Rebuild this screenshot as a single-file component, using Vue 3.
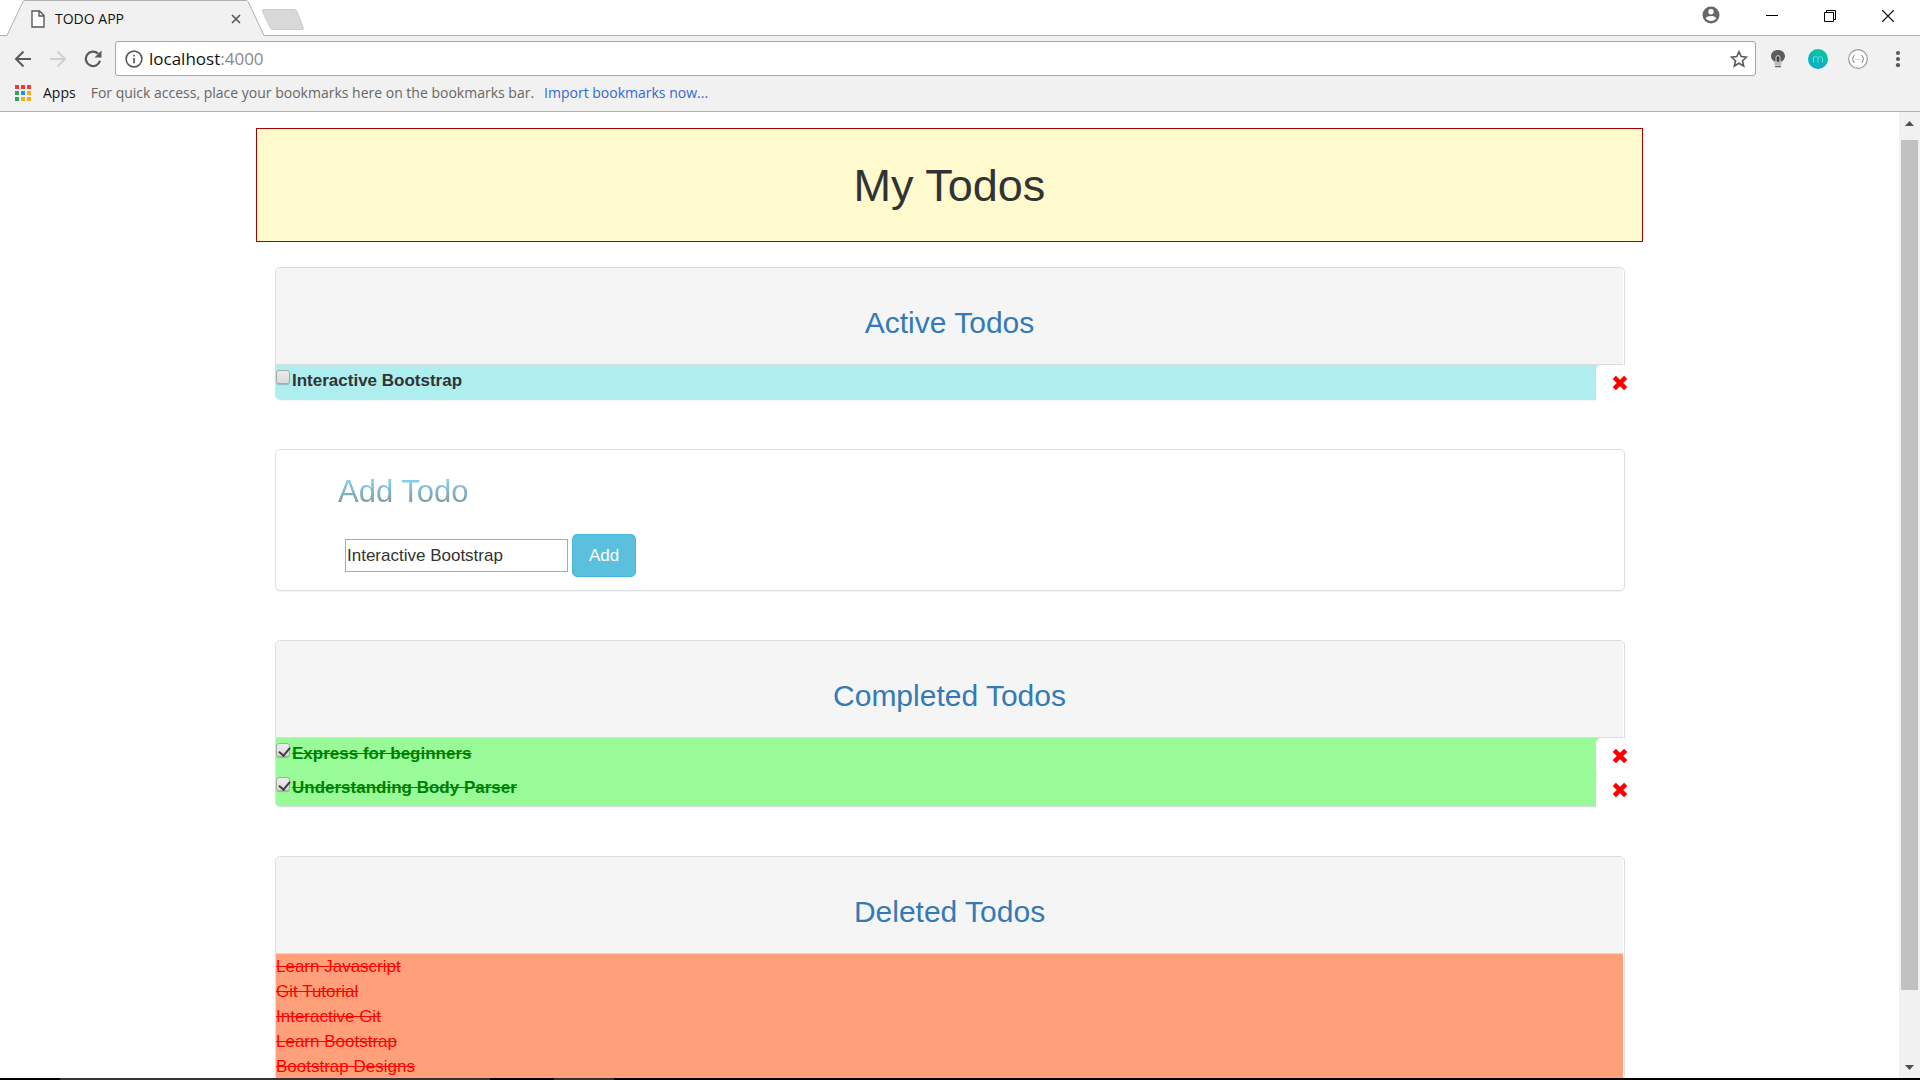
<script setup>
import { ref } from 'vue'

const newTodo = ref('Interactive Bootstrap')
const active = ref([{ text: 'Interactive Bootstrap', done: false }])
const completed = ref([
  { text: 'Express for beginners', done: true },
  { text: 'Understanding Body Parser', done: true },
])
const deleted = ref(['Learn Javascript', 'Git Tutorial', 'Interactive Git', 'Learn Bootstrap', 'Bootstrap Designs'])

function addTodo() {
  if (newTodo.value) active.value.push({ text: newTodo.value, done: false })
}
function removeFrom(list, index) {
  deleted.value.push(list.splice(index, 1)[0].text)
}
</script>

<template>
  <div class="browser">
    <header class="chrome">
      <div class="tab-strip">
        <div class="tab">
          <svg class="tab-shape" width="266" height="36" viewBox="0 0 266 36" aria-hidden="true">
            <path d="M0 36V35.500H7L23 1.500Q24 .5 25 .5H246Q247.500 .5 248 1.500L264 35.500H266V36Z" fill="#f1f1f1" />
            <path d="M0 35.500H7L23 1.500Q24 .5 25 .5H246Q247.500 .5 248 1.500L264 35.500H266" fill="none" stroke="#b0b0b0" />
          </svg>
          <svg class="page-icon" width="14" height="18" viewBox="0 0 14 18" aria-hidden="true">
            <path d="M1 1H8.500L13 5.500V17H1ZM8 1V6H13" fill="#fff" stroke="#5a5a5a" stroke-width="1.400" />
          </svg>
          <span class="tab-title">TODO APP</span>
          <button class="tab-close" aria-label="Close tab">
            <svg width="10" height="10" viewBox="0 0 10 10"><path d="M1 1L9 9M9 1L1 9" stroke="#555" stroke-width="1.600" /></svg>
          </button>
        </div>
        <button class="new-tab" aria-label="New tab">
          <svg width="44" height="22" viewBox="0 0 44 22"><path d="M3 .5H33Q35 .5 36 2.500L42 18Q43 20.500 41 20.500H12Q10 20.500 9 18.500L1.500 2.500Q1 .5 3 .5Z" fill="#d8d8d8" stroke="#cacaca" /></svg>
        </button>
        <div class="window-controls">
          <button class="user" aria-label="User">
            <svg width="18" height="18" viewBox="0 0 18 18"><circle cx="9" cy="9" r="8.500" fill="#666" /><circle cx="9" cy="5.800" r="2.700" fill="#fff" /><path d="M3.600 12.300C4.600 10.200 7 9.900 9 9.900S13.400 10.200 14.400 12.300C13 14.300 11 15 9 15S5 14.300 3.600 12.300Z" fill="#fff" /></svg>
          </button>
          <button aria-label="Minimize"><svg width="12" height="12" viewBox="0 0 12 12"><path d="M0 5.500H12" stroke="#000" /></svg></button>
          <button aria-label="Restore"><svg width="12" height="12" viewBox="0 0 12 12"><path d="M.5 2.500H9.500V11.500H.5ZM2.500 2.500V.5H11.500V9.500H9.500" fill="none" stroke="#000" /></svg></button>
          <button aria-label="Close"><svg width="12" height="12" viewBox="0 0 12 12"><path d="M0 0L12 12M12 0L0 12" stroke="#000" stroke-width="1.200" /></svg></button>
        </div>
      </div>

      <div class="toolbar">
        <nav class="nav-buttons">
          <button aria-label="Back"><svg width="18" height="18" viewBox="0 0 18 18"><path d="M17 9H2.500M9.500 1.500L2 9L9.500 16.500" fill="none" stroke="#5a5a5a" stroke-width="2" /></svg></button>
          <button aria-label="Forward"><svg width="18" height="18" viewBox="0 0 18 18"><path d="M1 9H15.500M8.500 1.500L16 9L8.500 16.500" fill="none" stroke="#d0d0d0" stroke-width="2" /></svg></button>
          <button aria-label="Reload"><svg width="18" height="18" viewBox="0 0 18 18"><path d="M14.200 3.800A7.200 7.200 0 1 0 16 10.800" fill="none" stroke="#5a5a5a" stroke-width="2.200" /><path d="M17.500 .5V7.500H10.500Z" fill="#5a5a5a" /></svg></button>
        </nav>
        <div class="omnibox">
          <svg width="18" height="18" viewBox="0 0 18 18" aria-hidden="true"><circle cx="9" cy="9" r="7.900" fill="none" stroke="#5a5a5a" stroke-width="1.600" /><path d="M9 8V13.200M9 4.800V6.500" stroke="#5a5a5a" stroke-width="1.700" /></svg>
          <span class="address" role="textbox" aria-label="Address" contenteditable="true" spellcheck="false">localhost<span class="port">:4000</span></span>
          <button aria-label="Bookmark this page"><svg width="18" height="18" viewBox="0 0 18 18"><path d="M9 1.800L11.200 6.600L16.500 7.100L12.500 10.700L13.700 16L9 13.200L4.300 16L5.500 10.700L1.500 7.100L6.800 6.600Z" fill="none" stroke="#5a5a5a" stroke-width="1.600" /></svg></button>
        </div>
        <div class="extensions">
          <button class="bulb" aria-label="Lightbulb">
            <svg width="16" height="20" viewBox="0 0 16 20"><path d="M8 1C3.800 1 1 3.700 1 7.200C1 10 3 11.500 4.200 12.500H11.800C13 11.500 15 10 15 7.200C15 3.700 12.200 1 8 1Z" fill="#5c5c5c" /><path d="M6 13V8.500Q6 6.500 8 6.500T10 8.500V13" fill="none" stroke="#ccc" /><path d="M8 8V13" stroke="#222" /><path d="M4.500 13H11.500V16H4.500Z" fill="#bbb" /><path d="M5 17.500H11" stroke="#666" stroke-width="1.500" /></svg>
          </button>
          <button aria-label="Momentum">
            <svg width="20" height="20" viewBox="0 0 20 20"><defs><linearGradient id="teal" x1="0" y1="1" x2=".6" y2="0"><stop offset="0" stop-color="#0aa5d8" /><stop offset="1" stop-color="#08c69c" /></linearGradient></defs><circle cx="10" cy="10" r="10" fill="url(#teal)" /><path d="M5.500 13.500V7.500M5.500 9.500Q5.800 7.500 7.800 7.500T10 9.700V13.500M10 9.700Q10 7.500 12.200 7.500T14.500 9.700V13.500" fill="none" stroke="#6fdcd8" /></svg>
          </button>
          <button aria-label="JSON viewer">
            <svg width="20" height="20" viewBox="0 0 20 20"><circle cx="10" cy="10" r="9.300" fill="#fff" stroke="#999" stroke-width="1.200" /><path d="M6.500 6.500Q5.200 6.500 5.200 8T4.200 10Q5.200 10.300 5.200 12T6.500 13.500M13.500 6.500Q14.800 6.500 14.800 8T15.800 10Q14.800 10.300 14.800 12T13.500 13.500" fill="none" stroke="#777" /><path d="M7.500 10.500H13" stroke="#aaa" stroke-dasharray="1 1" /></svg>
          </button>
          <button class="menu" aria-label="Menu"><svg width="6" height="18" viewBox="0 0 6 18"><g fill="#5a5a5a"><circle cx="3" cy="3" r="2.100" /><circle cx="3" cy="9" r="2.100" /><circle cx="3" cy="15.200" r="2.100" /></g></svg></button>
        </div>
      </div>

      <div class="bookmarks">
        <a class="apps" href="#">
          <svg width="17" height="17" viewBox="0 0 17 17" aria-hidden="true">
            <g fill="#f23a36"><rect width="4" height="4" /><rect x="6" width="4" height="4" /><rect x="12" width="4" height="4" /></g>
            <g fill="#35a15a"><rect y="6" width="4" height="4" /><rect y="12" width="4" height="4" /></g>
            <rect x="6" y="6" width="4" height="4" fill="#2a8bf2" />
            <g fill="#fbab0c"><rect x="12" y="6" width="4" height="4" /><rect x="6" y="12" width="4" height="4" /><rect x="12" y="12" width="4" height="4" /></g>
          </svg>
          Apps
        </a>
        <span class="hint">For quick access, place your bookmarks here on the bookmarks bar.</span>
        <a class="import" href="#">Import bookmarks now...</a>
      </div>
    </header>

    <div class="viewport">
      <main class="page">
        <div class="container">
          <h1 class="banner">My Todos</h1>

          <div class="panels">
            <section class="panel">
              <h3 class="panel-heading"><a href="#">Active Todos</a></h3>
              <ul class="todo-list active-list">
                <li v-for="(todo, i) in active" :key="i">
                  <label><input v-model="todo.done" type="checkbox" />{{ todo.text }}</label>
                  <button class="remove" :aria-label="'Delete ' + todo.text" @click="removeFrom(active, i)">
                    <svg width="16" height="16" viewBox="0 0 14 14"><path d="M2 2L12 12M12 2L2 12" stroke="#f00" stroke-width="4" /></svg>
                  </button>
                </li>
              </ul>
            </section>

            <section class="panel add-panel">
              <h3><label for="new-todo">Add Todo</label></h3>
              <form @submit.prevent="addTodo">
                <input id="new-todo" v-model="newTodo" type="text" />
                <button type="submit">Add</button>
              </form>
            </section>

            <section class="panel">
              <h3 class="panel-heading"><a href="#">Completed Todos</a></h3>
              <ul class="todo-list completed-list">
                <li v-for="(todo, i) in completed" :key="i">
                  <label><input v-model="todo.done" type="checkbox" /><s>{{ todo.text }}</s></label>
                  <button class="remove" :aria-label="'Delete ' + todo.text" @click="removeFrom(completed, i)">
                    <svg width="16" height="16" viewBox="0 0 14 14"><path d="M2 2L12 12M12 2L2 12" stroke="#f00" stroke-width="4" /></svg>
                  </button>
                </li>
              </ul>
            </section>

            <section class="panel">
              <h3 class="panel-heading"><a href="#">Deleted Todos</a></h3>
              <ul class="deleted-list">
                <li v-for="(text, i) in deleted" :key="i"><s>{{ text }}</s></li>
              </ul>
            </section>
          </div>
        </div>
      </main>
      <div class="scrollbar" aria-hidden="true">
        <svg width="9" height="5" viewBox="0 0 9 5"><path d="M0 5L4.500 0L9 5Z" fill="#505050" /></svg>
        <div class="track"><div class="thumb"></div></div>
        <svg width="9" height="5" viewBox="0 0 9 5"><path d="M0 0L4.500 5L9 0Z" fill="#505050" /></svg>
      </div>
    </div>
    <div class="taskbar" aria-hidden="true"></div>
  </div>
</template>

<style>
body {
  margin: 0;
}
</style>

<style scoped>
* {
  box-sizing: border-box;
}
button {
  display: flex;
  align-items: center;
  justify-content: center;
  padding: 0;
  border: 0;
  background: none;
  font: inherit;
}
svg {
  display: block;
  flex: none;
}
a {
  text-decoration: none;
}
ul {
  margin: 0;
  padding: 0;
  list-style: none;
}
.browser {
  display: flex;
  flex-direction: column;
  height: 100vh;
  overflow: hidden;
  background: #fff;
  color: #333;
  font: 17px/25px "Liberation Sans", Arial, sans-serif;
}

/* Browser chrome */
.chrome {
  flex: none;
  border-bottom: 1px solid #b0b0b0;
  background: #f1f1f1;
  font: 14px/20px "Open Sans", "Segoe UI", sans-serif;
}
.tab-strip {
  display: flex;
  height: 36px;
  border-bottom: 1px solid #b0b0b0;
  background: #fff;
}
.tab {
  position: relative;
  display: flex;
  align-items: center;
  width: 266px;
  height: 36px;
  padding: 2px 25px 0 31px;
}
.tab-shape {
  position: absolute;
  inset: 0;
}
.page-icon,
.tab-title,
.tab-close {
  position: relative;
}
.tab-title {
  flex: 1;
  margin-left: 10px;
  color: #111;
}
.new-tab {
  height: 22px;
  margin: 9px 0 0 -5px;
}
.window-controls {
  display: flex;
  align-items: center;
  height: 32px;
  margin-left: auto;
  padding-right: 3px;
}
.window-controls button {
  width: 58px;
  height: 34px;
}
.window-controls .user {
  width: 64px;
  height: 30px;
  padding-bottom: 2px;
}
.toolbar {
  display: flex;
  align-items: center;
  height: 45px;
}
.nav-buttons {
  display: flex;
  gap: 17px;
  padding: 0 13px 0 14px;
}
.omnibox {
  display: flex;
  flex: 1;
  align-items: center;
  gap: 6px;
  height: 35px;
  padding: 0 7px 0 9px;
  border: 1px solid #a6a6a6;
  border-radius: 3px;
  background: #fff;
}
.address {
  flex: 1;
  outline: 0;
  color: #111;
  font-size: 17px;
}
.port {
  color: #888;
}
.extensions {
  display: flex;
  align-items: center;
  gap: 20px;
  padding: 0 19px 0 14px;
}
.bulb {
  margin-right: 2px;
}
.menu {
  margin-left: 7px;
}
.bookmarks {
  display: flex;
  align-items: center;
  height: 30px;
  padding: 0 15px 6px;
}
.apps {
  display: flex;
  align-items: center;
  gap: 11px;
  color: #111;
}
.hint {
  margin-left: 15px;
  color: #666;
}
.import {
  margin-left: 10px;
  color: #3367d6;
}

/* Page */
.viewport {
  display: flex;
  flex: 1;
  min-height: 0;
}
.page {
  flex: 1;
  padding: 16px 20px 0;
  overflow: hidden;
}
.container {
  max-width: 1387px;
  margin: 0 auto;
}
.banner {
  margin: 0 0 25px;
  padding: 32px 0 30px;
  border: 1px solid #a80000;
  background: #fffacd;
  font-size: 45px;
  font-weight: 400;
  line-height: 50px;
  text-align: center;
}
.panels {
  display: flex;
  flex-direction: column;
  gap: 49px;
  padding: 0 18px 0 19px;
}
.panel {
  padding-right: 1px;
  border: 1px solid #ddd;
  border-radius: 5px;
  box-shadow: 0 1px 1px rgba(0, 0, 0, 0.05);
}
.panel-heading {
  margin: 0;
  padding: 38px 0 24px;
  border-bottom: 1px solid #ddd;
  border-radius: 4px 4px 0 0;
  background: #f5f5f5;
  font-size: 30px;
  font-weight: 400;
  line-height: 34px;
  text-align: center;
}
.panel-heading a {
  color: #337ab7;
}
.todo-list {
  border-bottom-left-radius: 4px;
  font-weight: 700;
}
.active-list {
  background: #afeeee;
}
.completed-list {
  background: #98fb98;
  color: green;
}
.todo-list li {
  display: flex;
  justify-content: space-between;
  height: 34px;
}
.todo-list label {
  display: flex;
  gap: 2px;
  padding-top: 3px;
}
.todo-list input {
  position: relative;
  width: 14px;
  height: 14px;
  margin: 2px 0 0;
  border: 1px solid #a9a9a9;
  border-radius: 3px;
  appearance: none;
  background: linear-gradient(#ececec, #dadada);
  box-shadow: 0 1px 1px rgba(0, 0, 0, 0.2);
}
.todo-list input:checked::after {
  position: absolute;
  top: 1px;
  left: 4px;
  width: 5px;
  height: 9px;
  border: solid #3c3c3c;
  border-width: 0 2px 2px 0;
  content: "";
  transform: rotate(40deg);
}
.remove {
  width: 48px;
  height: 36px;
  margin-right: -21px;
  border-radius: 5px;
  border-bottom-left-radius: 0;
  background: #fff;
}
.add-panel {
  padding: 24px 62px 13px;
}
.add-panel h3 {
  margin: 0 0 25px;
  font-size: 31px;
  font-weight: 400;
  line-height: 35px;
}
.add-panel h3 label {
  background: linear-gradient(#87ceeb 20%, #8199a5 80%);
  background-clip: text;
  color: transparent;
}
.add-panel form {
  display: flex;
  align-items: center;
  gap: 4px;
  padding-left: 7px;
}
.add-panel input {
  width: 223px;
  height: 33px;
  padding: 0 1px;
  border: 1px solid #a9a9a9;
  color: #333;
  font: inherit;
}
.add-panel button {
  width: 64px;
  height: 43px;
  border: 1px solid #46b8da;
  border-radius: 5px;
  background: #5bc0de;
  color: #fff;
}
.deleted-list {
  background: #ffa07a;
  color: red;
}
.scrollbar {
  display: flex;
  flex-direction: column;
  align-items: center;
  width: 21px;
  padding: 9px 0 8px;
  background: #f1f1f1;
}
.track {
  flex: 1;
  width: 17px;
  margin: 14px 0 13px;
}
.thumb {
  height: calc(100% - 62px);
  background: #c1c1c1;
}
.taskbar {
  flex: none;
  height: 2px;
  background: linear-gradient(90deg, #000 60px, #333 60px 490px, #000 490px 554px, #333 554px 614px, #000 614px);
}
</style>
